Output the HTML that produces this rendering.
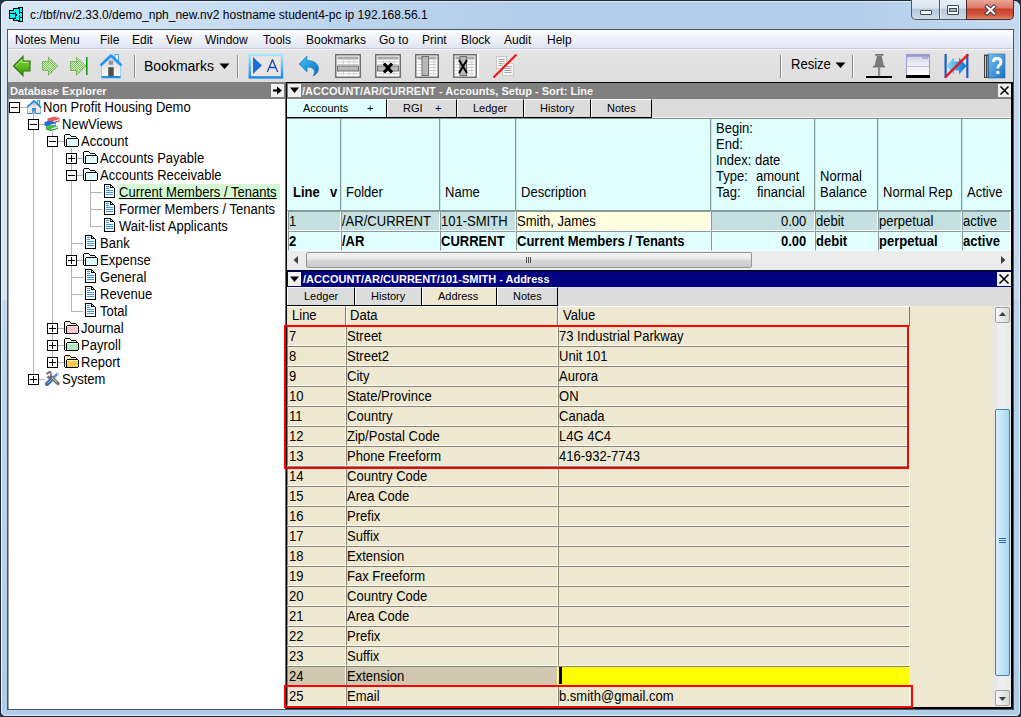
<!DOCTYPE html><html><head><meta charset="utf-8"><style>
html,body{margin:0;padding:0;} body{width:1021px;height:717px;overflow:hidden;position:relative;font-family:"Liberation Sans", sans-serif;background:#2a3444;}
div{box-sizing:border-box;}
</style></head><body>
<div style="position:absolute;left:0px;top:0px;width:1021px;height:717px;background:linear-gradient(90deg,#d8e6f4 0px,#cde0f2 180px,#bcd5ee 330px,#b4cfeb 520px,#b4cfeb 860px,#c6daf0 1021px);border:1px solid #1c2a3a;border-radius:7px 7px 6px 6px;"></div>
<div style="position:absolute;left:1px;top:1px;width:1019px;height:715px;border:1px solid rgba(255,255,255,0.55);border-radius:6px 6px 5px 5px;"></div>
<div style="position:absolute;left:2px;top:300px;width:6px;height:409px;background:linear-gradient(#c4d9f0,#b0cce8);"></div>
<div style="position:absolute;left:1013px;top:300px;width:6px;height:409px;background:linear-gradient(#bcd4ee,#b0cce8);"></div>
<div style="position:absolute;left:1px;top:700px;width:1019px;height:16px;background:#b1cde9;border:1px solid rgba(255,255,255,0.55);border-top:none;border-radius:0 0 5px 5px;"></div>
<svg style="position:absolute;left:0px;top:0px" width="30" height="30" viewBox="0 0 30 30"><rect x="9" y="10" width="7" height="9" fill="#000"/><rect x="13" y="8" width="7" height="13" fill="#000"/><rect x="18" y="7" width="5" height="15" fill="#000"/><rect x="10" y="11" width="5" height="2" fill="#00ffff"/><rect x="10" y="14" width="5" height="4" fill="#00ffff"/><rect x="14" y="9" width="5" height="3" fill="#00ffff"/><rect x="16" y="12" width="3" height="2" fill="#00ffff"/><rect x="16" y="16" width="3" height="4" fill="#00ffff"/><rect x="14" y="19" width="3" height="1" fill="#00ffff"/><rect x="17" y="14" width="2" height="2" fill="#00ffff"/><rect x="20" y="8" width="2" height="4" fill="#00ffff"/><rect x="20" y="13" width="2" height="4" fill="#00ffff"/><rect x="20" y="18" width="2" height="3" fill="#00ffff"/><rect x="19" y="14" width="1" height="1" fill="#00ffff"/></svg>
<div style="position:absolute;left:30px;top:8px;font-size:12px;font-weight:normal;color:#000;line-height:15px;white-space:pre;">c:/tbf/nv/2.33.0/demo_nph_new.nv2 hostname student4-pc ip 192.168.56.1</div>
<div style="position:absolute;left:911px;top:0px;width:56px;height:20px;background:linear-gradient(#e8eff8,#dae5f1 40%,#b9cadd 50%,#c4d3e4 80%,#d0dcea);border:1px solid #4a5868;border-top:none;border-radius:0 0 0 5px;"></div>
<div style="position:absolute;left:939px;top:0px;width:1px;height:20px;background:#4a5868;"></div>
<div style="position:absolute;left:940px;top:0px;width:1px;height:19px;background:rgba(255,255,255,0.6);"></div>
<div style="position:absolute;left:920px;top:10px;width:12px;height:5px;background:#fff;border:1px solid #3c4858;border-radius:1px;"></div>
<div style="position:absolute;left:947px;top:5px;width:12px;height:10px;border:1px solid #3c4858;border-radius:1px;background:#fff;"></div>
<div style="position:absolute;left:949px;top:8px;width:8px;height:4px;background:#a8b8cc;border:1px solid #3c4858;"></div>
<div style="position:absolute;left:966px;top:0px;width:48px;height:20px;background:linear-gradient(#eaa698,#dc7a68 40%,#c8402a 50%,#d05a40 80%,#e08a70);border:1px solid #4a2820;border-top:none;border-radius:0 0 5px 0;"></div>
<svg style="position:absolute;left:983px;top:4px" width="15" height="12" viewBox="0 0 15 12"><path d="M4 2.8 L11 9.2 M11 2.8 L4 9.2" stroke="#3a3a4a" stroke-width="4" stroke-linecap="square"/><path d="M4 2.8 L11 9.2 M11 2.8 L4 9.2" stroke="#fff" stroke-width="2.2" stroke-linecap="square"/></svg>
<div style="position:absolute;left:7px;top:29px;width:1007px;height:681px;background:#fff;border:1px solid #4a5564;"></div>
<div style="position:absolute;left:8px;top:30px;width:1005px;height:19px;background:linear-gradient(#fcfdfe,#eef1f9 50%,#dce2ef);"></div>
<div style="position:absolute;left:8px;top:48px;width:1005px;height:1px;background:#c8ccd8;"></div>
<div style="position:absolute;left:8px;top:49px;width:1005px;height:1px;background:#f8f8fa;"></div>
<div style="position:absolute;left:15px;top:33px;font-size:12px;font-weight:normal;color:#000;line-height:15px;white-space:pre;">Notes Menu</div>
<div style="position:absolute;left:100px;top:33px;font-size:12px;font-weight:normal;color:#000;line-height:15px;white-space:pre;">File</div>
<div style="position:absolute;left:132px;top:33px;font-size:12px;font-weight:normal;color:#000;line-height:15px;white-space:pre;">Edit</div>
<div style="position:absolute;left:166px;top:33px;font-size:12px;font-weight:normal;color:#000;line-height:15px;white-space:pre;">View</div>
<div style="position:absolute;left:205px;top:33px;font-size:12px;font-weight:normal;color:#000;line-height:15px;white-space:pre;">Window</div>
<div style="position:absolute;left:263px;top:33px;font-size:12px;font-weight:normal;color:#000;line-height:15px;white-space:pre;">Tools</div>
<div style="position:absolute;left:306px;top:33px;font-size:12px;font-weight:normal;color:#000;line-height:15px;white-space:pre;">Bookmarks</div>
<div style="position:absolute;left:379px;top:33px;font-size:12px;font-weight:normal;color:#000;line-height:15px;white-space:pre;">Go to</div>
<div style="position:absolute;left:422px;top:33px;font-size:12px;font-weight:normal;color:#000;line-height:15px;white-space:pre;">Print</div>
<div style="position:absolute;left:461px;top:33px;font-size:12px;font-weight:normal;color:#000;line-height:15px;white-space:pre;">Block</div>
<div style="position:absolute;left:504px;top:33px;font-size:12px;font-weight:normal;color:#000;line-height:15px;white-space:pre;">Audit</div>
<div style="position:absolute;left:547px;top:33px;font-size:12px;font-weight:normal;color:#000;line-height:15px;white-space:pre;">Help</div>
<div style="position:absolute;left:8px;top:50px;width:1005px;height:32px;background:linear-gradient(#e4e4e4,#dedede);"></div>
<svg style="position:absolute;left:0;top:0" width="0" height="0"><defs><linearGradient id="gG" x1="0" y1="0" x2="0" y2="1"><stop offset="0" stop-color="#8ad84a"/><stop offset="1" stop-color="#3c9a00"/></linearGradient><pattern id="dots" width="2" height="2" patternUnits="userSpaceOnUse"><rect width="1" height="1" fill="#3c9a10"/><rect x="1" y="1" width="1" height="1" fill="#3c9a10"/><rect x="1" width="1" height="1" fill="#b8e0a0"/><rect y="1" width="1" height="1" fill="#b8e0a0"/></pattern><linearGradient id="gB" x1="0" y1="0" x2="1" y2="1"><stop offset="0" stop-color="#40c8f8"/><stop offset="1" stop-color="#0a6ab8"/></linearGradient><linearGradient id="gAB" x1="0" y1="0" x2="0" y2="1"><stop offset="0" stop-color="#a8e8ff"/><stop offset="1" stop-color="#1888e8"/></linearGradient></defs></svg>
<svg style="position:absolute;left:12px;top:55px" width="20" height="22" viewBox="0 0 20 22"><path d="M1.5 11 L11 1.5 L11 6 L18 6 L18 16 L11 16 L11 20.5 Z" fill="url(#gG)" stroke="#2e7a10" stroke-width="1.2"/><path d="M4 11 L10 5 L10 7.5 L16.5 7.5" fill="none" stroke="#b8f080" stroke-width="1" opacity="0.8"/></svg>
<svg style="position:absolute;left:0;top:0" width="0" height="0"><defs><pattern id="dots2" width="2" height="2" patternUnits="userSpaceOnUse"><rect width="2" height="2" fill="#d4eec4"/><rect width="1" height="1" fill="#7cc060"/><rect x="1" y="1" width="1" height="1" fill="#7cc060"/></pattern></defs></svg>
<svg style="position:absolute;left:41px;top:55px" width="20" height="22" viewBox="0 0 20 22"><path d="M1.5 6.5 L7.5 6.5 L7.5 2 L17 11 L7.5 20 L7.5 15.5 L1.5 15.5 Z" fill="url(#dots2)" stroke="#3a9a18" stroke-width="1" stroke-dasharray="1 1"/></svg>
<svg style="position:absolute;left:69px;top:55px" width="20" height="22" viewBox="0 0 20 22"><path d="M1.5 6.5 L7.5 6.5 L7.5 2 L17 11 L7.5 20 L7.5 15.5 L1.5 15.5 Z" fill="url(#dots2)" stroke="#3a9a18" stroke-width="1" stroke-dasharray="1 1"/><rect x="17" y="2" width="1.6" height="18" fill="#1a9a1a"/></svg>
<svg style="position:absolute;left:99px;top:53px" width="24" height="26" viewBox="0 0 24 26"><defs><linearGradient id="gW" x1="0" y1="0" x2="0" y2="1"><stop offset="0" stop-color="#d0d0d0"/><stop offset="1" stop-color="#ffffff"/></linearGradient></defs><rect x="16" y="1.5" width="3.5" height="7" fill="#e8f4fc" stroke="#48a8e8" stroke-width="1"/><path d="M2.5 12 L12 3 L21.5 12 L21.5 24 L2.5 24 Z" fill="url(#gW)" stroke="#90c8f0" stroke-width="0.8"/><path d="M1.5 12.5 L12 2.5 L22.5 12.5" fill="none" stroke="#2098f0" stroke-width="2.6" stroke-linejoin="round"/><rect x="2.5" y="23" width="19" height="2.2" fill="#1a90e8"/><rect x="9.2" y="14.2" width="5.5" height="9" fill="#505050"/><rect x="9.8" y="7.7" width="4.2" height="4" fill="#909090"/></svg>
<div style="position:absolute;left:134px;top:55px;width:1px;height:23px;background:#8c8c8c;"></div>
<div style="position:absolute;left:135px;top:55px;width:1px;height:23px;background:#f8f8f8;"></div>
<div style="position:absolute;left:237px;top:55px;width:1px;height:23px;background:#8c8c8c;"></div>
<div style="position:absolute;left:238px;top:55px;width:1px;height:23px;background:#f8f8f8;"></div>
<div style="position:absolute;left:780px;top:55px;width:1px;height:23px;background:#8c8c8c;"></div>
<div style="position:absolute;left:781px;top:55px;width:1px;height:23px;background:#f8f8f8;"></div>
<div style="position:absolute;left:852px;top:55px;width:1px;height:23px;background:#8c8c8c;"></div>
<div style="position:absolute;left:853px;top:55px;width:1px;height:23px;background:#f8f8f8;"></div>
<div style="position:absolute;left:144px;top:58px;font-size:14px;font-weight:normal;color:#000;line-height:17px;white-space:pre;">Bookmarks</div>
<svg style="position:absolute;left:219px;top:63px" width="11" height="7" viewBox="0 0 11 7"><path d="M0.5 0.5 L10.5 0.5 L5.5 6 Z" fill="#000"/></svg>
<div style="position:absolute;left:791px;top:56px;font-size:14px;font-weight:normal;color:#000;line-height:17px;white-space:pre;transform:scaleX(0.93);transform-origin:0 0;">Resize</div>
<svg style="position:absolute;left:835px;top:62px" width="11" height="7" viewBox="0 0 11 7"><path d="M0.5 0.5 L10.5 0.5 L5.5 6 Z" fill="#000"/></svg>
<svg style="position:absolute;left:248px;top:53px" width="36" height="26" viewBox="0 0 36 26"><rect x="1.8" y="2" width="32.2" height="22.4" fill="#ece4e0" stroke="url(#gAB)" stroke-width="2.4"/><path d="M5 4 L5 21 L14 12.5 Z" fill="#1a70d8"/><path d="M19.3 19 L24.5 6.8 L29.7 19 M21.2 14.5 L27.8 14.5" fill="none" stroke="#1048b0" stroke-width="1.3" stroke-linejoin="round"/></svg>
<svg style="position:absolute;left:298px;top:55px" width="22" height="22" viewBox="0 0 22 22"><path d="M1 9 L9 1 L9 5.5 C16 5 20.5 9 20.5 13.5 C20.5 17 18.5 19.5 15 21 C17 18 17 15 14 13 C12.5 12 10.5 12 9 12.5 L9 17 Z" fill="url(#gB)" stroke="#1a78c0" stroke-width="0.6"/></svg>
<svg style="position:absolute;left:335px;top:54px" width="26" height="24" viewBox="0 0 26 24"><rect x="0.75" y="0.75" width="24.5" height="22.5" fill="#fff" stroke="#6e6e6e" stroke-width="1.5"/><rect x="2.5" y="2.5" width="21" height="3" fill="#a8a8a8"/><rect x="2.5" y="7.5" width="21" height="0.8" fill="#c0c0c0"/><rect x="2.5" y="10" width="21" height="0.8" fill="#c0c0c0"/><rect x="2.5" y="13" width="21" height="0.8" fill="#c0c0c0"/><rect x="2.5" y="16" width="21" height="0.8" fill="#c0c0c0"/><rect x="2.5" y="19.5" width="21" height="0.8" fill="#c0c0c0"/><rect x="8" y="2.5" width="0.8" height="19" fill="#c8c8c8"/><rect x="13.5" y="2.5" width="0.8" height="19" fill="#c8c8c8"/><rect x="18.5" y="2.5" width="0.8" height="19" fill="#c8c8c8"/><rect x="2.5" y="12" width="21" height="5" fill="#b8b8b8" stroke="#707070" stroke-width="1"/></svg>
<svg style="position:absolute;left:375px;top:54px" width="26" height="24" viewBox="0 0 26 24"><rect x="0.75" y="0.75" width="24.5" height="22.5" fill="#fff" stroke="#6e6e6e" stroke-width="1.5"/><rect x="2.5" y="2.5" width="21" height="3" fill="#a8a8a8"/><rect x="2.5" y="7.5" width="21" height="0.8" fill="#c0c0c0"/><rect x="2.5" y="10" width="21" height="0.8" fill="#c0c0c0"/><rect x="2.5" y="13" width="21" height="0.8" fill="#c0c0c0"/><rect x="2.5" y="16" width="21" height="0.8" fill="#c0c0c0"/><rect x="2.5" y="19.5" width="21" height="0.8" fill="#c0c0c0"/><rect x="8" y="2.5" width="0.8" height="19" fill="#c8c8c8"/><rect x="13.5" y="2.5" width="0.8" height="19" fill="#c8c8c8"/><rect x="18.5" y="2.5" width="0.8" height="19" fill="#c8c8c8"/><rect x="2.5" y="12" width="21" height="5" fill="#b8b8b8" stroke="#707070" stroke-width="1"/><path d="M9 9.5 L17 18.5 M17 9.5 L9 18.5" stroke="#000" stroke-width="3"/></svg>
<svg style="position:absolute;left:415px;top:54px" width="24" height="24" viewBox="0 0 24 24"><rect x="0.75" y="0.75" width="22.5" height="22.5" fill="#fff" stroke="#6e6e6e" stroke-width="1.5"/><rect x="2.5" y="2.5" width="19" height="3" fill="#a8a8a8"/><rect x="2.5" y="7.5" width="19" height="0.8" fill="#c0c0c0"/><rect x="2.5" y="10" width="19" height="0.8" fill="#c0c0c0"/><rect x="2.5" y="13" width="19" height="0.8" fill="#c0c0c0"/><rect x="2.5" y="16" width="19" height="0.8" fill="#c0c0c0"/><rect x="2.5" y="19.5" width="19" height="0.8" fill="#c0c0c0"/><rect x="8" y="2.5" width="0.8" height="19" fill="#c8c8c8"/><rect x="13.5" y="2.5" width="0.8" height="19" fill="#c8c8c8"/><rect x="18.5" y="2.5" width="0.8" height="19" fill="#c8c8c8"/><rect x="7" y="2.5" width="6.5" height="19" fill="#b8b8b8" stroke="#707070" stroke-width="1"/></svg>
<svg style="position:absolute;left:453px;top:54px" width="24" height="24" viewBox="0 0 24 24"><rect x="0.75" y="0.75" width="22.5" height="22.5" fill="#fff" stroke="#6e6e6e" stroke-width="1.5"/><rect x="2.5" y="2.5" width="19" height="3" fill="#a8a8a8"/><rect x="2.5" y="7.5" width="19" height="0.8" fill="#c0c0c0"/><rect x="2.5" y="10" width="19" height="0.8" fill="#c0c0c0"/><rect x="2.5" y="13" width="19" height="0.8" fill="#c0c0c0"/><rect x="2.5" y="16" width="19" height="0.8" fill="#c0c0c0"/><rect x="2.5" y="19.5" width="19" height="0.8" fill="#c0c0c0"/><rect x="8" y="2.5" width="0.8" height="19" fill="#c8c8c8"/><rect x="13.5" y="2.5" width="0.8" height="19" fill="#c8c8c8"/><rect x="18.5" y="2.5" width="0.8" height="19" fill="#c8c8c8"/><rect x="7" y="2.5" width="6.5" height="19" fill="#b8b8b8" stroke="#707070" stroke-width="1"/><path d="M6 6 L14 19 M14 6 L6 19" stroke="#000" stroke-width="2"/></svg>
<div style="position:absolute;left:477px;top:54px;width:2px;height:24px;background:#fff;"></div>
<svg style="position:absolute;left:492px;top:53px" width="26" height="26" viewBox="0 0 26 26"><rect x="4.5" y="3.5" width="10" height="12" fill="#f4f4f4" stroke="#c8c8c8"/><path d="M6.5 6.5 h6 M6.5 8.5 h6 M6.5 10.5 h6 M6.5 12.5 h6" stroke="#909090" stroke-width="0.8"/><rect x="10.5" y="10.5" width="11" height="12" fill="#f4f4f4" stroke="#c8c8c8"/><path d="M12.5 13.5 h7 M12.5 15.5 h7 M12.5 17.5 h7 M12.5 19.5 h7" stroke="#909090" stroke-width="0.8"/><path d="M1.5 24.5 L24.5 1.5" stroke="#f01010" stroke-width="2"/></svg>
<svg style="position:absolute;left:865px;top:53px" width="28" height="26" viewBox="0 0 28 26"><rect x="10" y="1" width="8.5" height="1.6" fill="#707070"/><path d="M12 2.5 L16.5 2.5 L19 13 L9.5 13 Z" fill="#7a7a7a"/><rect x="8" y="12.8" width="12" height="1.6" fill="#707070"/><rect x="13" y="14.3" width="2.2" height="9" fill="#8a8a8a"/><rect x="1" y="23" width="26" height="2" fill="#000"/></svg>
<svg style="position:absolute;left:906px;top:54px" width="24" height="24" viewBox="0 0 24 24"><defs><linearGradient id="gL" x1="0" y1="0" x2="0" y2="1"><stop offset="0" stop-color="#c8c8e8"/><stop offset="0.35" stop-color="#e8e8f2"/><stop offset="0.55" stop-color="#f0f0f4"/><stop offset="1" stop-color="#ffffff"/></linearGradient></defs><rect x="0.5" y="0.5" width="23" height="22" fill="url(#gL)" stroke="#9c9cc8"/><rect x="1" y="1" width="22" height="1.8" fill="#9898d0"/><rect x="16" y="3" width="6" height="2" fill="#b0b0d8"/><rect x="1" y="12" width="22" height="1" fill="#c0c0dc"/><rect x="0" y="21" width="24" height="3" fill="#000"/></svg>
<svg style="position:absolute;left:943px;top:53px" width="27" height="26" viewBox="0 0 27 26"><defs><linearGradient id="gA1" x1="0" y1="0" x2="1" y2="0"><stop offset="0" stop-color="#90dcff"/><stop offset="1" stop-color="#40b0f0"/></linearGradient><linearGradient id="gA2" x1="0" y1="0" x2="1" y2="0"><stop offset="0" stop-color="#40a8f0"/><stop offset="1" stop-color="#1070d0"/></linearGradient></defs><rect x="1.5" y="1" width="2.2" height="24" fill="#1a60c8"/><rect x="23.2" y="1" width="2.2" height="24" fill="#1a60c8"/><path d="M3.5 13 L11 4.5 L11 8.5 L14 8.5 L14 17.5 L11 17.5 L11 21.5 Z" fill="url(#gA1)"/><path d="M23.5 13 L16 4.5 L16 8.5 L13 8.5 L13 17.5 L16 17.5 L16 21.5 Z" fill="url(#gA2)"/><path d="M2 24.5 L25 1.5" stroke="#f81010" stroke-width="2.4"/></svg>
<svg style="position:absolute;left:983px;top:53px" width="23" height="26" viewBox="0 0 23 26"><defs><linearGradient id="gH" x1="0" y1="0" x2="1" y2="1"><stop offset="0" stop-color="#78c0f0"/><stop offset="1" stop-color="#1a70c8"/></linearGradient></defs><rect x="1" y="1.5" width="5" height="23.5" fill="#404040"/><rect x="2" y="3" width="1" height="21" fill="#d0d0d0"/><rect x="4" y="3" width="1" height="21" fill="#909090"/><rect x="5.5" y="1" width="16.5" height="24" fill="url(#gH)" stroke="#2a6ab0" stroke-width="0.6"/><path d="M10.5 9 Q10.5 5.5 14 5.5 Q18 5.5 18 9 Q18 11 16 12.5 Q14.8 13.3 14.8 15.5" fill="none" stroke="#fff" stroke-width="2.8"/><circle cx="14.8" cy="19.5" r="1.8" fill="#fff"/></svg>
<div style="position:absolute;left:8px;top:82px;width:278px;height:627px;background:#fff;border-left:1px solid #a0a0a0;"></div>
<div style="position:absolute;left:8px;top:82px;width:277px;height:17px;background:#808080;"></div>
<div style="position:absolute;left:10px;top:84px;font-size:11px;font-weight:bold;color:#f6f6f6;line-height:14px;white-space:pre;">Database Explorer</div>
<div style="position:absolute;left:271px;top:84px;width:13px;height:13px;background:#f0f0f0;"></div>
<svg style="position:absolute;left:272px;top:85px" width="11" height="11" viewBox="0 0 11 11"><path d="M1 5.5 L7 5.5" stroke="#000" stroke-width="2.2"/><path d="M5 1.5 L10 5.5 L5 9.5 Z" fill="#000"/></svg>
<div style="position:absolute;left:285px;top:82px;width:1px;height:627px;background:#6a6a6a;"></div>
<div style="position:absolute;left:286px;top:82px;width:1px;height:627px;background:#000;"></div>
<div style="position:absolute;left:33px;top:114px;width:1px;height:260px;background:#b4b4b4;"></div>
<div style="position:absolute;left:52px;top:131px;width:1px;height:226px;background:#b4b4b4;"></div>
<div style="position:absolute;left:71px;top:148px;width:1px;height:163px;background:#b4b4b4;"></div>
<div style="position:absolute;left:90px;top:182px;width:1px;height:44px;background:#b4b4b4;"></div>
<div style="position:absolute;left:14px;top:107px;width:12px;height:1px;background:#b4b4b4;"></div>
<div style="position:absolute;left:9px;top:102px;width:11px;height:11px;background:#fff;border:1px solid #000;"></div>
<div style="position:absolute;left:11px;top:107px;width:7px;height:1px;background:#000;"></div>
<svg style="position:absolute;left:26px;top:99px" width="17" height="15" viewBox="0 0 17 15"><defs><radialGradient id="hw" cx="0.5" cy="0.2" r="0.8"><stop offset="0" stop-color="#c0c0c0"/><stop offset="0.5" stop-color="#f0f0f0"/><stop offset="1" stop-color="#e8e4e0"/></radialGradient><linearGradient id="hd" x1="0" y1="0" x2="0" y2="1"><stop offset="0" stop-color="#2a80c8"/><stop offset="1" stop-color="#90b8d0"/></linearGradient></defs><path d="M1.5 8 L8 2 L14.5 8 V14 H1.5 Z" fill="url(#hw)"/><path d="M11.8 5 V1.3 H13.7 V6" fill="#fff" stroke="#1a88e0" stroke-width="1"/><path d="M0.8 8.6 L8 1.8 L15.2 8.6" fill="none" stroke="#1a88e0" stroke-width="1.7"/><rect x="1" y="14" width="14" height="1" fill="#1a88e0"/><rect x="6" y="9" width="4" height="6" fill="url(#hd)"/><rect x="1" y="9" width="1" height="5" fill="#909090" opacity="0.5"/><rect x="14" y="9" width="1" height="5" fill="#909090" opacity="0.5"/></svg>
<div style="position:absolute;left:43px;top:99px;font-size:14px;font-weight:normal;color:#000;line-height:17px;white-space:pre;transform:scaleX(0.93);transform-origin:0 0;">Non Profit Housing Demo</div>
<div style="position:absolute;left:33px;top:124px;width:12px;height:1px;background:#b4b4b4;"></div>
<div style="position:absolute;left:28px;top:119px;width:11px;height:11px;background:#fff;border:1px solid #000;"></div>
<div style="position:absolute;left:30px;top:124px;width:7px;height:1px;background:#000;"></div>
<svg style="position:absolute;left:44px;top:116px" width="17" height="15" viewBox="0 0 17 15"><path d="M3.5 2.5 L10 0.5 L15.5 2 L15.5 5 L9 7 L3.5 5.5 Z" fill="#f05858"/><path d="M9.5 5.5 L15 3.8" stroke="#fff" stroke-width="1.3"/><path d="M3.5 5.5 L9 7 L15.5 5" fill="none" stroke="#b82020" stroke-width="0.8"/><path d="M0.5 6 L5 4.8 L12 6.5 L12 9.5 L5.5 11 L0.5 9.5 Z" fill="#1a70e0"/><path d="M5.8 9.6 L11.5 8.2" stroke="#fff" stroke-width="1.2"/><path d="M2 10 L6 9 L14 10.5 L14 12.5 L7 14.5 L2 13 Z" fill="#40c040"/><path d="M7.2 13 L13.5 11.4" stroke="#fff" stroke-width="1.1"/><path d="M2 13 L7 14.5 L14 12.5" fill="none" stroke="#208020" stroke-width="0.8"/></svg>
<div style="position:absolute;left:62px;top:116px;font-size:14px;font-weight:normal;color:#000;line-height:17px;white-space:pre;transform:scaleX(0.93);transform-origin:0 0;">NewViews</div>
<div style="position:absolute;left:52px;top:141px;width:12px;height:1px;background:#b4b4b4;"></div>
<div style="position:absolute;left:47px;top:136px;width:11px;height:11px;background:#fff;border:1px solid #000;"></div>
<div style="position:absolute;left:49px;top:141px;width:7px;height:1px;background:#000;"></div>
<svg style="position:absolute;left:64px;top:134px" width="16" height="13" viewBox="0 0 16 13"><rect x="1" y="1" width="5" height="11" fill="#f4ffff"/><rect x="6" y="2" width="7" height="2" fill="#f4ffff"/><rect x="3" y="5" width="11" height="7" fill="#e0ffff"/><rect x="3" y="5" width="11" height="1" fill="#f4ffff"/><rect x="0" y="1" width="1" height="11" fill="#000"/><rect x="1" y="0" width="5" height="1" fill="#000"/><rect x="6" y="1" width="1" height="1" fill="#000"/><rect x="7" y="2" width="5" height="1" fill="#000"/><rect x="12" y="3" width="1" height="1" fill="#000"/><rect x="3" y="4" width="11" height="1" fill="#000"/><rect x="2" y="5" width="1" height="7" fill="#000"/><rect x="14" y="5" width="1" height="7" fill="#000"/><rect x="1" y="12" width="13" height="1" fill="#000"/></svg>
<div style="position:absolute;left:81px;top:133px;font-size:14px;font-weight:normal;color:#000;line-height:17px;white-space:pre;transform:scaleX(0.93);transform-origin:0 0;">Account</div>
<div style="position:absolute;left:71px;top:158px;width:12px;height:1px;background:#b4b4b4;"></div>
<div style="position:absolute;left:66px;top:153px;width:11px;height:11px;background:#fff;border:1px solid #000;"></div>
<div style="position:absolute;left:68px;top:158px;width:7px;height:1px;background:#000;"></div>
<div style="position:absolute;left:71px;top:155px;width:1px;height:7px;background:#000;"></div>
<svg style="position:absolute;left:83px;top:151px" width="16" height="13" viewBox="0 0 16 13"><rect x="1" y="1" width="5" height="11" fill="#f4ffff"/><rect x="6" y="2" width="7" height="2" fill="#f4ffff"/><rect x="3" y="5" width="11" height="7" fill="#e0ffff"/><rect x="3" y="5" width="11" height="1" fill="#f4ffff"/><rect x="0" y="1" width="1" height="11" fill="#000"/><rect x="1" y="0" width="5" height="1" fill="#000"/><rect x="6" y="1" width="1" height="1" fill="#000"/><rect x="7" y="2" width="5" height="1" fill="#000"/><rect x="12" y="3" width="1" height="1" fill="#000"/><rect x="3" y="4" width="11" height="1" fill="#000"/><rect x="2" y="5" width="1" height="7" fill="#000"/><rect x="14" y="5" width="1" height="7" fill="#000"/><rect x="1" y="12" width="13" height="1" fill="#000"/></svg>
<div style="position:absolute;left:100px;top:150px;font-size:14px;font-weight:normal;color:#000;line-height:17px;white-space:pre;transform:scaleX(0.93);transform-origin:0 0;">Accounts Payable</div>
<div style="position:absolute;left:71px;top:175px;width:12px;height:1px;background:#b4b4b4;"></div>
<div style="position:absolute;left:66px;top:170px;width:11px;height:11px;background:#fff;border:1px solid #000;"></div>
<div style="position:absolute;left:68px;top:175px;width:7px;height:1px;background:#000;"></div>
<svg style="position:absolute;left:83px;top:168px" width="16" height="13" viewBox="0 0 16 13"><rect x="1" y="1" width="5" height="11" fill="#f4ffff"/><rect x="6" y="2" width="7" height="2" fill="#f4ffff"/><rect x="3" y="5" width="11" height="7" fill="#e0ffff"/><rect x="3" y="5" width="11" height="1" fill="#f4ffff"/><rect x="0" y="1" width="1" height="11" fill="#000"/><rect x="1" y="0" width="5" height="1" fill="#000"/><rect x="6" y="1" width="1" height="1" fill="#000"/><rect x="7" y="2" width="5" height="1" fill="#000"/><rect x="12" y="3" width="1" height="1" fill="#000"/><rect x="3" y="4" width="11" height="1" fill="#000"/><rect x="2" y="5" width="1" height="7" fill="#000"/><rect x="14" y="5" width="1" height="7" fill="#000"/><rect x="1" y="12" width="13" height="1" fill="#000"/></svg>
<div style="position:absolute;left:100px;top:167px;font-size:14px;font-weight:normal;color:#000;line-height:17px;white-space:pre;transform:scaleX(0.93);transform-origin:0 0;">Accounts Receivable</div>
<div style="position:absolute;left:90px;top:192px;width:12px;height:1px;background:#b4b4b4;"></div>
<svg style="position:absolute;left:104px;top:184px" width="11" height="14" viewBox="0 0 11 14"><rect x="1" y="1" width="9" height="12" fill="#fff"/><rect x="0" y="0" width="7" height="1" fill="#000"/><rect x="0" y="1" width="1" height="13" fill="#000"/><rect x="10" y="4" width="1" height="10" fill="#000"/><rect x="1" y="13" width="9" height="1" fill="#000"/><rect x="7" y="1" width="1" height="1" fill="#000"/><rect x="8" y="2" width="1" height="1" fill="#000"/><rect x="9" y="3" width="1" height="1" fill="#000"/><rect x="6" y="0" width="1" height="4" fill="#000"/><rect x="6" y="3" width="4" height="1" fill="#000"/><rect x="2" y="2" width="3" height="1" fill="#3898e8"/><rect x="2" y="4" width="3" height="1" fill="#3898e8"/><rect x="2" y="6" width="7" height="1" fill="#3898e8"/><rect x="2" y="8" width="7" height="1" fill="#3898e8"/><rect x="2" y="10" width="7" height="1" fill="#3898e8"/></svg>
<div style="position:absolute;left:117px;top:184px;width:163px;height:16px;background:#d4f8d4;"></div>
<div style="position:absolute;left:119px;top:184px;font-size:14px;font-weight:normal;color:#000;line-height:17px;white-space:pre;transform:scaleX(0.93);transform-origin:0 0;text-decoration:underline;">Current Members / Tenants</div>
<div style="position:absolute;left:90px;top:209px;width:12px;height:1px;background:#b4b4b4;"></div>
<svg style="position:absolute;left:104px;top:201px" width="11" height="14" viewBox="0 0 11 14"><rect x="1" y="1" width="9" height="12" fill="#fff"/><rect x="0" y="0" width="7" height="1" fill="#000"/><rect x="0" y="1" width="1" height="13" fill="#000"/><rect x="10" y="4" width="1" height="10" fill="#000"/><rect x="1" y="13" width="9" height="1" fill="#000"/><rect x="7" y="1" width="1" height="1" fill="#000"/><rect x="8" y="2" width="1" height="1" fill="#000"/><rect x="9" y="3" width="1" height="1" fill="#000"/><rect x="6" y="0" width="1" height="4" fill="#000"/><rect x="6" y="3" width="4" height="1" fill="#000"/><rect x="2" y="2" width="3" height="1" fill="#3898e8"/><rect x="2" y="4" width="3" height="1" fill="#3898e8"/><rect x="2" y="6" width="7" height="1" fill="#3898e8"/><rect x="2" y="8" width="7" height="1" fill="#3898e8"/><rect x="2" y="10" width="7" height="1" fill="#3898e8"/></svg>
<div style="position:absolute;left:119px;top:201px;font-size:14px;font-weight:normal;color:#000;line-height:17px;white-space:pre;transform:scaleX(0.93);transform-origin:0 0;">Former Members / Tenants</div>
<div style="position:absolute;left:90px;top:226px;width:12px;height:1px;background:#b4b4b4;"></div>
<svg style="position:absolute;left:104px;top:218px" width="11" height="14" viewBox="0 0 11 14"><rect x="1" y="1" width="9" height="12" fill="#fff"/><rect x="0" y="0" width="7" height="1" fill="#000"/><rect x="0" y="1" width="1" height="13" fill="#000"/><rect x="10" y="4" width="1" height="10" fill="#000"/><rect x="1" y="13" width="9" height="1" fill="#000"/><rect x="7" y="1" width="1" height="1" fill="#000"/><rect x="8" y="2" width="1" height="1" fill="#000"/><rect x="9" y="3" width="1" height="1" fill="#000"/><rect x="6" y="0" width="1" height="4" fill="#000"/><rect x="6" y="3" width="4" height="1" fill="#000"/><rect x="2" y="2" width="3" height="1" fill="#3898e8"/><rect x="2" y="4" width="3" height="1" fill="#3898e8"/><rect x="2" y="6" width="7" height="1" fill="#3898e8"/><rect x="2" y="8" width="7" height="1" fill="#3898e8"/><rect x="2" y="10" width="7" height="1" fill="#3898e8"/></svg>
<div style="position:absolute;left:119px;top:218px;font-size:14px;font-weight:normal;color:#000;line-height:17px;white-space:pre;transform:scaleX(0.93);transform-origin:0 0;">Wait-list Applicants</div>
<div style="position:absolute;left:71px;top:243px;width:12px;height:1px;background:#b4b4b4;"></div>
<svg style="position:absolute;left:85px;top:235px" width="11" height="14" viewBox="0 0 11 14"><rect x="1" y="1" width="9" height="12" fill="#fff"/><rect x="0" y="0" width="7" height="1" fill="#000"/><rect x="0" y="1" width="1" height="13" fill="#000"/><rect x="10" y="4" width="1" height="10" fill="#000"/><rect x="1" y="13" width="9" height="1" fill="#000"/><rect x="7" y="1" width="1" height="1" fill="#000"/><rect x="8" y="2" width="1" height="1" fill="#000"/><rect x="9" y="3" width="1" height="1" fill="#000"/><rect x="6" y="0" width="1" height="4" fill="#000"/><rect x="6" y="3" width="4" height="1" fill="#000"/><rect x="2" y="2" width="3" height="1" fill="#3898e8"/><rect x="2" y="4" width="3" height="1" fill="#3898e8"/><rect x="2" y="6" width="7" height="1" fill="#3898e8"/><rect x="2" y="8" width="7" height="1" fill="#3898e8"/><rect x="2" y="10" width="7" height="1" fill="#3898e8"/></svg>
<div style="position:absolute;left:100px;top:235px;font-size:14px;font-weight:normal;color:#000;line-height:17px;white-space:pre;transform:scaleX(0.93);transform-origin:0 0;">Bank</div>
<div style="position:absolute;left:71px;top:260px;width:12px;height:1px;background:#b4b4b4;"></div>
<div style="position:absolute;left:66px;top:255px;width:11px;height:11px;background:#fff;border:1px solid #000;"></div>
<div style="position:absolute;left:68px;top:260px;width:7px;height:1px;background:#000;"></div>
<div style="position:absolute;left:71px;top:257px;width:1px;height:7px;background:#000;"></div>
<svg style="position:absolute;left:83px;top:253px" width="16" height="13" viewBox="0 0 16 13"><rect x="1" y="1" width="5" height="11" fill="#f4ffff"/><rect x="6" y="2" width="7" height="2" fill="#f4ffff"/><rect x="3" y="5" width="11" height="7" fill="#e0ffff"/><rect x="3" y="5" width="11" height="1" fill="#f4ffff"/><rect x="0" y="1" width="1" height="11" fill="#000"/><rect x="1" y="0" width="5" height="1" fill="#000"/><rect x="6" y="1" width="1" height="1" fill="#000"/><rect x="7" y="2" width="5" height="1" fill="#000"/><rect x="12" y="3" width="1" height="1" fill="#000"/><rect x="3" y="4" width="11" height="1" fill="#000"/><rect x="2" y="5" width="1" height="7" fill="#000"/><rect x="14" y="5" width="1" height="7" fill="#000"/><rect x="1" y="12" width="13" height="1" fill="#000"/></svg>
<div style="position:absolute;left:100px;top:252px;font-size:14px;font-weight:normal;color:#000;line-height:17px;white-space:pre;transform:scaleX(0.93);transform-origin:0 0;">Expense</div>
<div style="position:absolute;left:71px;top:277px;width:12px;height:1px;background:#b4b4b4;"></div>
<svg style="position:absolute;left:85px;top:269px" width="11" height="14" viewBox="0 0 11 14"><rect x="1" y="1" width="9" height="12" fill="#fff"/><rect x="0" y="0" width="7" height="1" fill="#000"/><rect x="0" y="1" width="1" height="13" fill="#000"/><rect x="10" y="4" width="1" height="10" fill="#000"/><rect x="1" y="13" width="9" height="1" fill="#000"/><rect x="7" y="1" width="1" height="1" fill="#000"/><rect x="8" y="2" width="1" height="1" fill="#000"/><rect x="9" y="3" width="1" height="1" fill="#000"/><rect x="6" y="0" width="1" height="4" fill="#000"/><rect x="6" y="3" width="4" height="1" fill="#000"/><rect x="2" y="2" width="3" height="1" fill="#3898e8"/><rect x="2" y="4" width="3" height="1" fill="#3898e8"/><rect x="2" y="6" width="7" height="1" fill="#3898e8"/><rect x="2" y="8" width="7" height="1" fill="#3898e8"/><rect x="2" y="10" width="7" height="1" fill="#3898e8"/></svg>
<div style="position:absolute;left:100px;top:269px;font-size:14px;font-weight:normal;color:#000;line-height:17px;white-space:pre;transform:scaleX(0.93);transform-origin:0 0;">General</div>
<div style="position:absolute;left:71px;top:294px;width:12px;height:1px;background:#b4b4b4;"></div>
<svg style="position:absolute;left:85px;top:286px" width="11" height="14" viewBox="0 0 11 14"><rect x="1" y="1" width="9" height="12" fill="#fff"/><rect x="0" y="0" width="7" height="1" fill="#000"/><rect x="0" y="1" width="1" height="13" fill="#000"/><rect x="10" y="4" width="1" height="10" fill="#000"/><rect x="1" y="13" width="9" height="1" fill="#000"/><rect x="7" y="1" width="1" height="1" fill="#000"/><rect x="8" y="2" width="1" height="1" fill="#000"/><rect x="9" y="3" width="1" height="1" fill="#000"/><rect x="6" y="0" width="1" height="4" fill="#000"/><rect x="6" y="3" width="4" height="1" fill="#000"/><rect x="2" y="2" width="3" height="1" fill="#3898e8"/><rect x="2" y="4" width="3" height="1" fill="#3898e8"/><rect x="2" y="6" width="7" height="1" fill="#3898e8"/><rect x="2" y="8" width="7" height="1" fill="#3898e8"/><rect x="2" y="10" width="7" height="1" fill="#3898e8"/></svg>
<div style="position:absolute;left:100px;top:286px;font-size:14px;font-weight:normal;color:#000;line-height:17px;white-space:pre;transform:scaleX(0.93);transform-origin:0 0;">Revenue</div>
<div style="position:absolute;left:71px;top:311px;width:12px;height:1px;background:#b4b4b4;"></div>
<svg style="position:absolute;left:85px;top:303px" width="11" height="14" viewBox="0 0 11 14"><rect x="1" y="1" width="9" height="12" fill="#fff"/><rect x="0" y="0" width="7" height="1" fill="#000"/><rect x="0" y="1" width="1" height="13" fill="#000"/><rect x="10" y="4" width="1" height="10" fill="#000"/><rect x="1" y="13" width="9" height="1" fill="#000"/><rect x="7" y="1" width="1" height="1" fill="#000"/><rect x="8" y="2" width="1" height="1" fill="#000"/><rect x="9" y="3" width="1" height="1" fill="#000"/><rect x="6" y="0" width="1" height="4" fill="#000"/><rect x="6" y="3" width="4" height="1" fill="#000"/><rect x="2" y="2" width="3" height="1" fill="#3898e8"/><rect x="2" y="4" width="3" height="1" fill="#3898e8"/><rect x="2" y="6" width="7" height="1" fill="#3898e8"/><rect x="2" y="8" width="7" height="1" fill="#3898e8"/><rect x="2" y="10" width="7" height="1" fill="#3898e8"/></svg>
<div style="position:absolute;left:100px;top:303px;font-size:14px;font-weight:normal;color:#000;line-height:17px;white-space:pre;transform:scaleX(0.93);transform-origin:0 0;">Total</div>
<div style="position:absolute;left:52px;top:328px;width:12px;height:1px;background:#b4b4b4;"></div>
<div style="position:absolute;left:47px;top:323px;width:11px;height:11px;background:#fff;border:1px solid #000;"></div>
<div style="position:absolute;left:49px;top:328px;width:7px;height:1px;background:#000;"></div>
<div style="position:absolute;left:52px;top:325px;width:1px;height:7px;background:#000;"></div>
<svg style="position:absolute;left:64px;top:321px" width="16" height="13" viewBox="0 0 16 13"><rect x="1" y="1" width="5" height="11" fill="#ffe8ec"/><rect x="6" y="2" width="7" height="2" fill="#ffe8ec"/><rect x="3" y="5" width="11" height="7" fill="#ffc4cc"/><rect x="3" y="5" width="11" height="1" fill="#ffe8ec"/><rect x="0" y="1" width="1" height="11" fill="#000"/><rect x="1" y="0" width="5" height="1" fill="#000"/><rect x="6" y="1" width="1" height="1" fill="#000"/><rect x="7" y="2" width="5" height="1" fill="#000"/><rect x="12" y="3" width="1" height="1" fill="#000"/><rect x="3" y="4" width="11" height="1" fill="#000"/><rect x="2" y="5" width="1" height="7" fill="#000"/><rect x="14" y="5" width="1" height="7" fill="#000"/><rect x="1" y="12" width="13" height="1" fill="#000"/></svg>
<div style="position:absolute;left:81px;top:320px;font-size:14px;font-weight:normal;color:#000;line-height:17px;white-space:pre;transform:scaleX(0.93);transform-origin:0 0;">Journal</div>
<div style="position:absolute;left:52px;top:345px;width:12px;height:1px;background:#b4b4b4;"></div>
<div style="position:absolute;left:47px;top:340px;width:11px;height:11px;background:#fff;border:1px solid #000;"></div>
<div style="position:absolute;left:49px;top:345px;width:7px;height:1px;background:#000;"></div>
<div style="position:absolute;left:52px;top:342px;width:1px;height:7px;background:#000;"></div>
<svg style="position:absolute;left:64px;top:338px" width="16" height="13" viewBox="0 0 16 13"><rect x="1" y="1" width="5" height="11" fill="#e0f8e8"/><rect x="6" y="2" width="7" height="2" fill="#e0f8e8"/><rect x="3" y="5" width="11" height="7" fill="#b4e8c4"/><rect x="3" y="5" width="11" height="1" fill="#e0f8e8"/><rect x="0" y="1" width="1" height="11" fill="#000"/><rect x="1" y="0" width="5" height="1" fill="#000"/><rect x="6" y="1" width="1" height="1" fill="#000"/><rect x="7" y="2" width="5" height="1" fill="#000"/><rect x="12" y="3" width="1" height="1" fill="#000"/><rect x="3" y="4" width="11" height="1" fill="#000"/><rect x="2" y="5" width="1" height="7" fill="#000"/><rect x="14" y="5" width="1" height="7" fill="#000"/><rect x="1" y="12" width="13" height="1" fill="#000"/></svg>
<div style="position:absolute;left:81px;top:337px;font-size:14px;font-weight:normal;color:#000;line-height:17px;white-space:pre;transform:scaleX(0.93);transform-origin:0 0;">Payroll</div>
<div style="position:absolute;left:52px;top:362px;width:12px;height:1px;background:#b4b4b4;"></div>
<div style="position:absolute;left:47px;top:357px;width:11px;height:11px;background:#fff;border:1px solid #000;"></div>
<div style="position:absolute;left:49px;top:362px;width:7px;height:1px;background:#000;"></div>
<div style="position:absolute;left:52px;top:359px;width:1px;height:7px;background:#000;"></div>
<svg style="position:absolute;left:64px;top:355px" width="16" height="13" viewBox="0 0 16 13"><rect x="1" y="1" width="5" height="11" fill="#fff0b0"/><rect x="6" y="2" width="7" height="2" fill="#fff0b0"/><rect x="3" y="5" width="11" height="7" fill="#f0cc50"/><rect x="3" y="5" width="11" height="1" fill="#fff0b0"/><rect x="0" y="1" width="1" height="11" fill="#000"/><rect x="1" y="0" width="5" height="1" fill="#000"/><rect x="6" y="1" width="1" height="1" fill="#000"/><rect x="7" y="2" width="5" height="1" fill="#000"/><rect x="12" y="3" width="1" height="1" fill="#000"/><rect x="3" y="4" width="11" height="1" fill="#000"/><rect x="2" y="5" width="1" height="7" fill="#000"/><rect x="14" y="5" width="1" height="7" fill="#000"/><rect x="1" y="12" width="13" height="1" fill="#000"/></svg>
<div style="position:absolute;left:81px;top:354px;font-size:14px;font-weight:normal;color:#000;line-height:17px;white-space:pre;transform:scaleX(0.93);transform-origin:0 0;">Report</div>
<div style="position:absolute;left:33px;top:379px;width:12px;height:1px;background:#b4b4b4;"></div>
<div style="position:absolute;left:28px;top:374px;width:11px;height:11px;background:#fff;border:1px solid #000;"></div>
<div style="position:absolute;left:30px;top:379px;width:7px;height:1px;background:#000;"></div>
<div style="position:absolute;left:33px;top:376px;width:1px;height:7px;background:#000;"></div>
<svg style="position:absolute;left:42px;top:368px" width="20" height="20" viewBox="0 0 20 20"><path d="M5 16 L11 10" stroke="#3a68b0" stroke-width="4" stroke-linecap="round"/><path d="M5.5 15.5 L10.5 10.5" stroke="#a8c4e4" stroke-width="1"/><path d="M11 10 L15.5 6" stroke="#5a88d0" stroke-width="2.4" stroke-linecap="round"/><circle cx="15.6" cy="6.2" r="0.8" fill="#fff"/><path d="M8.5 8.5 L16 15.5" stroke="#6a6a6a" stroke-width="3.2" stroke-linecap="round"/><path d="M8.8 8.6 L15.2 14.6" stroke="#f0f0f0" stroke-width="1"/><path d="M4.6 9.6 A3.6 3.6 0 0 0 10 9.8 L9.6 3.8 A3.6 3.6 0 0 0 4 6 L6.3 7.4 Z" fill="#707070"/><path d="M5.2 6.6 L7.6 8.4 L8.6 5 Z" fill="#fff"/></svg>
<div style="position:absolute;left:62px;top:371px;font-size:14px;font-weight:normal;color:#000;line-height:17px;white-space:pre;transform:scaleX(0.93);transform-origin:0 0;">System</div>
<div style="position:absolute;left:286px;top:82px;width:727px;height:627px;background:#000;"></div>
<div style="position:absolute;left:287px;top:83px;width:724px;height:16px;background:#808080;"></div>
<div style="position:absolute;left:288px;top:84px;width:13px;height:13px;background:#f0f0f0;"></div>
<svg style="position:absolute;left:289px;top:86px" width="11" height="9" viewBox="0 0 11 9"><path d="M1 1.5 L10 1.5 L5.5 7 Z" fill="#000"/></svg>
<div style="position:absolute;left:302px;top:84px;font-size:11px;font-weight:bold;color:#f6f6f6;line-height:14px;white-space:pre;">/ACCOUNT/AR/CURRENT - Accounts, Setup - Sort: Line</div>
<div style="position:absolute;left:998px;top:84px;width:13px;height:13px;background:#f0f0f0;"></div>
<svg style="position:absolute;left:999px;top:85px" width="11" height="11" viewBox="0 0 11 11"><path d="M1.5 1.5 L9.5 9.5 M9.5 1.5 L1.5 9.5" stroke="#000" stroke-width="1.6"/></svg>
<div style="position:absolute;left:287px;top:99px;width:724px;height:20px;background:#dcdcdc;border-bottom:1px solid #8a8a8a;"></div>
<div style="position:absolute;left:652px;top:117px;width:359px;height:1px;background:#f0f0f0;"></div>
<div style="position:absolute;left:287px;top:117px;width:365px;height:1px;background:#000;"></div>
<div style="position:absolute;left:287px;top:99px;width:100px;height:18px;background:#e0ffff;border-top:1px solid #fff;border-left:1px solid #e0ffff;border-right:1px solid #000;"></div>
<div style="position:absolute;left:303px;top:101px;font-size:11px;font-weight:normal;color:#000;line-height:14px;white-space:pre;">Accounts</div>
<div style="position:absolute;left:367px;top:101px;font-size:11px;font-weight:normal;color:#000;line-height:14px;white-space:pre;">+</div>
<div style="position:absolute;left:387px;top:99px;width:70px;height:18px;background:#dcdcdc;border-top:1px solid #fff;border-left:1px solid #fff;border-right:1px solid #000;"></div>
<div style="position:absolute;left:403px;top:101px;font-size:11px;font-weight:normal;color:#000;line-height:14px;white-space:pre;">RGI</div>
<div style="position:absolute;left:435px;top:101px;font-size:11px;font-weight:normal;color:#000;line-height:14px;white-space:pre;">+</div>
<div style="position:absolute;left:457px;top:99px;width:67px;height:18px;background:#dcdcdc;border-top:1px solid #fff;border-left:1px solid #fff;border-right:1px solid #000;"></div>
<div style="position:absolute;left:473px;top:101px;font-size:11px;font-weight:normal;color:#000;line-height:14px;white-space:pre;">Ledger</div>
<div style="position:absolute;left:524px;top:99px;width:67px;height:18px;background:#dcdcdc;border-top:1px solid #fff;border-left:1px solid #fff;border-right:1px solid #000;"></div>
<div style="position:absolute;left:540px;top:101px;font-size:11px;font-weight:normal;color:#000;line-height:14px;white-space:pre;">History</div>
<div style="position:absolute;left:591px;top:99px;width:61px;height:18px;background:#dcdcdc;border-top:1px solid #fff;border-left:1px solid #fff;border-right:1px solid #000;"></div>
<div style="position:absolute;left:607px;top:101px;font-size:11px;font-weight:normal;color:#000;line-height:14px;white-space:pre;">Notes</div>
<div style="position:absolute;left:287px;top:119px;width:724px;height:132px;background:#e0ffff;"></div>
<div style="position:absolute;left:340px;top:119px;width:1px;height:92px;background:#809a9a;"></div>
<div style="position:absolute;left:341px;top:119px;width:1px;height:92px;background:#c4e8e8;"></div>
<div style="position:absolute;left:439px;top:119px;width:1px;height:92px;background:#809a9a;"></div>
<div style="position:absolute;left:440px;top:119px;width:1px;height:92px;background:#c4e8e8;"></div>
<div style="position:absolute;left:515px;top:119px;width:1px;height:92px;background:#809a9a;"></div>
<div style="position:absolute;left:516px;top:119px;width:1px;height:92px;background:#c4e8e8;"></div>
<div style="position:absolute;left:710px;top:119px;width:1px;height:92px;background:#809a9a;"></div>
<div style="position:absolute;left:711px;top:119px;width:1px;height:92px;background:#c4e8e8;"></div>
<div style="position:absolute;left:814px;top:119px;width:1px;height:92px;background:#809a9a;"></div>
<div style="position:absolute;left:815px;top:119px;width:1px;height:92px;background:#c4e8e8;"></div>
<div style="position:absolute;left:877px;top:119px;width:1px;height:92px;background:#809a9a;"></div>
<div style="position:absolute;left:878px;top:119px;width:1px;height:92px;background:#c4e8e8;"></div>
<div style="position:absolute;left:961px;top:119px;width:1px;height:92px;background:#809a9a;"></div>
<div style="position:absolute;left:962px;top:119px;width:1px;height:92px;background:#c4e8e8;"></div>
<div style="position:absolute;left:287px;top:210px;width:724px;height:1px;background:#809a9a;"></div>
<div style="position:absolute;left:293px;top:184px;font-size:14px;font-weight:bold;color:#000;line-height:17px;white-space:pre;transform:scaleX(0.93);transform-origin:0 0;">Line</div>
<div style="position:absolute;left:330px;top:184px;font-size:14px;font-weight:bold;color:#000;line-height:17px;white-space:pre;transform:scaleX(0.93);transform-origin:0 0;">v</div>
<div style="position:absolute;left:346px;top:184px;font-size:14px;font-weight:normal;color:#000;line-height:17px;white-space:pre;transform:scaleX(0.93);transform-origin:0 0;">Folder</div>
<div style="position:absolute;left:445px;top:184px;font-size:14px;font-weight:normal;color:#000;line-height:17px;white-space:pre;transform:scaleX(0.93);transform-origin:0 0;">Name</div>
<div style="position:absolute;left:521px;top:184px;font-size:14px;font-weight:normal;color:#000;line-height:17px;white-space:pre;transform:scaleX(0.93);transform-origin:0 0;">Description</div>
<div style="position:absolute;left:716px;top:120px;font-size:14px;font-weight:normal;color:#000;line-height:17px;white-space:pre;transform:scaleX(0.93);transform-origin:0 0;">Begin:</div>
<div style="position:absolute;left:716px;top:136px;font-size:14px;font-weight:normal;color:#000;line-height:17px;white-space:pre;transform:scaleX(0.93);transform-origin:0 0;">End:</div>
<div style="position:absolute;left:716px;top:152px;font-size:14px;font-weight:normal;color:#000;line-height:17px;white-space:pre;transform:scaleX(0.93);transform-origin:0 0;">Index:</div>
<div style="position:absolute;left:755px;top:152px;font-size:14px;font-weight:normal;color:#000;line-height:17px;white-space:pre;transform:scaleX(0.93);transform-origin:0 0;">date</div>
<div style="position:absolute;left:716px;top:168px;font-size:14px;font-weight:normal;color:#000;line-height:17px;white-space:pre;transform:scaleX(0.93);transform-origin:0 0;">Type:</div>
<div style="position:absolute;left:756px;top:168px;font-size:14px;font-weight:normal;color:#000;line-height:17px;white-space:pre;transform:scaleX(0.93);transform-origin:0 0;">amount</div>
<div style="position:absolute;left:716px;top:184px;font-size:14px;font-weight:normal;color:#000;line-height:17px;white-space:pre;transform:scaleX(0.93);transform-origin:0 0;">Tag:</div>
<div style="position:absolute;left:757px;top:184px;font-size:14px;font-weight:normal;color:#000;line-height:17px;white-space:pre;transform:scaleX(0.93);transform-origin:0 0;">financial</div>
<div style="position:absolute;left:820px;top:168px;font-size:14px;font-weight:normal;color:#000;line-height:17px;white-space:pre;transform:scaleX(0.93);transform-origin:0 0;">Normal</div>
<div style="position:absolute;left:820px;top:184px;font-size:14px;font-weight:normal;color:#000;line-height:17px;white-space:pre;transform:scaleX(0.93);transform-origin:0 0;">Balance</div>
<div style="position:absolute;left:883px;top:184px;font-size:14px;font-weight:normal;color:#000;line-height:17px;white-space:pre;transform:scaleX(0.93);transform-origin:0 0;">Normal Rep</div>
<div style="position:absolute;left:967px;top:184px;font-size:14px;font-weight:normal;color:#000;line-height:17px;white-space:pre;transform:scaleX(0.93);transform-origin:0 0;">Active</div>
<div style="position:absolute;left:288px;top:211px;width:53px;height:20px;background:#c4e0e0;border-top:1px solid #8a9a9a;border-left:1px solid #8a9a9a;border-bottom:1px solid #fff;border-right:1px solid #fff;"></div>
<div style="position:absolute;left:288px;top:231px;width:53px;height:20px;background:#e0ffff;border-top:1px solid #8a9a9a;border-left:1px solid #8a9a9a;border-bottom:1px solid #f0ffff;border-right:1px solid #fff;"></div>
<div style="position:absolute;left:341px;top:211px;width:99px;height:20px;background:#c4e0e0;border-top:1px solid #8a9a9a;border-left:1px solid #8a9a9a;border-bottom:1px solid #fff;border-right:1px solid #fff;"></div>
<div style="position:absolute;left:341px;top:231px;width:99px;height:20px;background:#e0ffff;border-top:1px solid #8a9a9a;border-left:1px solid #8a9a9a;border-bottom:1px solid #f0ffff;border-right:1px solid #fff;"></div>
<div style="position:absolute;left:440px;top:211px;width:76px;height:20px;background:#c4e0e0;border-top:1px solid #8a9a9a;border-left:1px solid #8a9a9a;border-bottom:1px solid #fff;border-right:1px solid #fff;"></div>
<div style="position:absolute;left:440px;top:231px;width:76px;height:20px;background:#e0ffff;border-top:1px solid #8a9a9a;border-left:1px solid #8a9a9a;border-bottom:1px solid #f0ffff;border-right:1px solid #fff;"></div>
<div style="position:absolute;left:516px;top:211px;width:195px;height:20px;background:#ffffe0;border-top:1px solid #8a9a9a;border-left:1px solid #8a9a9a;border-bottom:1px solid #fff;border-right:1px solid #fff;"></div>
<div style="position:absolute;left:516px;top:231px;width:195px;height:20px;background:#e0ffff;border-top:1px solid #8a9a9a;border-left:1px solid #8a9a9a;border-bottom:1px solid #f0ffff;border-right:1px solid #fff;"></div>
<div style="position:absolute;left:711px;top:211px;width:104px;height:20px;background:#c4e0e0;border-top:1px solid #8a9a9a;border-left:1px solid #8a9a9a;border-bottom:1px solid #fff;border-right:1px solid #fff;"></div>
<div style="position:absolute;left:711px;top:231px;width:104px;height:20px;background:#e0ffff;border-top:1px solid #8a9a9a;border-left:1px solid #8a9a9a;border-bottom:1px solid #f0ffff;border-right:1px solid #fff;"></div>
<div style="position:absolute;left:815px;top:211px;width:63px;height:20px;background:#c4e0e0;border-top:1px solid #8a9a9a;border-left:1px solid #8a9a9a;border-bottom:1px solid #fff;border-right:1px solid #fff;"></div>
<div style="position:absolute;left:815px;top:231px;width:63px;height:20px;background:#e0ffff;border-top:1px solid #8a9a9a;border-left:1px solid #8a9a9a;border-bottom:1px solid #f0ffff;border-right:1px solid #fff;"></div>
<div style="position:absolute;left:878px;top:211px;width:84px;height:20px;background:#c4e0e0;border-top:1px solid #8a9a9a;border-left:1px solid #8a9a9a;border-bottom:1px solid #fff;border-right:1px solid #fff;"></div>
<div style="position:absolute;left:878px;top:231px;width:84px;height:20px;background:#e0ffff;border-top:1px solid #8a9a9a;border-left:1px solid #8a9a9a;border-bottom:1px solid #f0ffff;border-right:1px solid #fff;"></div>
<div style="position:absolute;left:962px;top:211px;width:49px;height:20px;background:#c4e0e0;border-top:1px solid #8a9a9a;border-left:1px solid #8a9a9a;border-bottom:1px solid #fff;border-right:1px solid #fff;"></div>
<div style="position:absolute;left:962px;top:231px;width:49px;height:20px;background:#e0ffff;border-top:1px solid #8a9a9a;border-left:1px solid #8a9a9a;border-bottom:1px solid #f0ffff;border-right:1px solid #fff;"></div>
<div style="position:absolute;left:289px;top:213px;font-size:14px;font-weight:normal;color:#000;line-height:17px;white-space:pre;transform:scaleX(0.93);transform-origin:0 0;">1</div>
<div style="position:absolute;left:342px;top:213px;font-size:14px;font-weight:normal;color:#000;line-height:17px;white-space:pre;transform:scaleX(0.93);transform-origin:0 0;">/AR/CURRENT</div>
<div style="position:absolute;left:441px;top:213px;font-size:14px;font-weight:normal;color:#000;line-height:17px;white-space:pre;transform:scaleX(0.93);transform-origin:0 0;">101-SMITH</div>
<div style="position:absolute;left:517px;top:213px;font-size:14px;font-weight:normal;color:#000;line-height:17px;white-space:pre;transform:scaleX(0.93);transform-origin:0 0;">Smith, James</div>
<div style="position:absolute;right:215px;top:213px;font-size:14px;font-weight:normal;line-height:17px;white-space:pre;transform:scaleX(0.93);transform-origin:100% 0;">0.00</div>
<div style="position:absolute;left:816px;top:213px;font-size:14px;font-weight:normal;color:#000;line-height:17px;white-space:pre;transform:scaleX(0.93);transform-origin:0 0;">debit</div>
<div style="position:absolute;left:879px;top:213px;font-size:14px;font-weight:normal;color:#000;line-height:17px;white-space:pre;transform:scaleX(0.93);transform-origin:0 0;">perpetual</div>
<div style="position:absolute;left:963px;top:213px;font-size:14px;font-weight:normal;color:#000;line-height:17px;white-space:pre;transform:scaleX(0.93);transform-origin:0 0;">active</div>
<div style="position:absolute;left:289px;top:233px;font-size:14px;font-weight:bold;color:#000;line-height:17px;white-space:pre;transform:scaleX(0.93);transform-origin:0 0;">2</div>
<div style="position:absolute;left:342px;top:233px;font-size:14px;font-weight:bold;color:#000;line-height:17px;white-space:pre;transform:scaleX(0.93);transform-origin:0 0;">/AR</div>
<div style="position:absolute;left:441px;top:233px;font-size:14px;font-weight:bold;color:#000;line-height:17px;white-space:pre;transform:scaleX(0.93);transform-origin:0 0;">CURRENT</div>
<div style="position:absolute;left:517px;top:233px;font-size:14px;font-weight:bold;color:#000;line-height:17px;white-space:pre;transform:scaleX(0.93);transform-origin:0 0;">Current Members / Tenants</div>
<div style="position:absolute;right:215px;top:233px;font-size:14px;font-weight:bold;line-height:17px;white-space:pre;transform:scaleX(0.93);transform-origin:100% 0;">0.00</div>
<div style="position:absolute;left:816px;top:233px;font-size:14px;font-weight:bold;color:#000;line-height:17px;white-space:pre;transform:scaleX(0.93);transform-origin:0 0;">debit</div>
<div style="position:absolute;left:879px;top:233px;font-size:14px;font-weight:bold;color:#000;line-height:17px;white-space:pre;transform:scaleX(0.93);transform-origin:0 0;">perpetual</div>
<div style="position:absolute;left:963px;top:233px;font-size:14px;font-weight:bold;color:#000;line-height:17px;white-space:pre;transform:scaleX(0.93);transform-origin:0 0;">active</div>
<div style="position:absolute;left:287px;top:251px;width:724px;height:19px;background:#ececec;"></div>
<svg style="position:absolute;left:292px;top:255px" width="8" height="10" viewBox="0 0 8 10"><path d="M6 1 L1.5 5 L6 9 Z" fill="#404040"/></svg>
<div style="position:absolute;left:306px;top:252px;width:446px;height:16px;background:linear-gradient(#f4f4f4,#e8e8e8 45%,#d8d8d8 50%,#cccccc);border:1px solid #959595;border-radius:2px;"></div>
<svg style="position:absolute;left:525px;top:256px" width="8" height="8" viewBox="0 0 8 8"><path d="M1.5 1 v6 M3.5 1 v6 M5.5 1 v6" stroke="#404040" stroke-width="0.9"/></svg>
<svg style="position:absolute;left:999px;top:255px" width="8" height="10" viewBox="0 0 8 10"><path d="M2 1 L6.5 5 L2 9 Z" fill="#404040"/></svg>
<div style="position:absolute;left:287px;top:271px;width:724px;height:16px;background:#000080;"></div>
<div style="position:absolute;left:288px;top:272px;width:13px;height:14px;background:#f0f0f0;"></div>
<svg style="position:absolute;left:289px;top:275px" width="11" height="9" viewBox="0 0 11 9"><path d="M1 1.5 L10 1.5 L5.5 7 Z" fill="#000"/></svg>
<div style="position:absolute;left:303px;top:272px;font-size:11px;font-weight:bold;color:#fff;line-height:14px;white-space:pre;">/ACCOUNT/AR/CURRENT/101-SMITH - Address</div>
<div style="position:absolute;left:997px;top:272px;width:14px;height:14px;background:#f0f0f0;"></div>
<svg style="position:absolute;left:998px;top:273px" width="12" height="12" viewBox="0 0 12 12"><path d="M1.5 1.5 L10.5 10.5 M10.5 1.5 L1.5 10.5" stroke="#000" stroke-width="1.6"/></svg>
<div style="position:absolute;left:287px;top:287px;width:724px;height:19px;background:#dcdcdc;"></div>
<div style="position:absolute;left:287px;top:305px;width:271px;height:1px;background:#000;"></div>
<div style="position:absolute;left:287px;top:287px;width:68px;height:18px;background:#dcdcdc;border-top:1px solid #fff;border-left:1px solid #fff;border-right:1px solid #000;"></div>
<div style="position:absolute;left:304px;top:289px;font-size:11px;font-weight:normal;color:#000;line-height:14px;white-space:pre;">Ledger</div>
<div style="position:absolute;left:355px;top:287px;width:67px;height:18px;background:#dcdcdc;border-top:1px solid #fff;border-left:1px solid #fff;border-right:1px solid #000;"></div>
<div style="position:absolute;left:371px;top:289px;font-size:11px;font-weight:normal;color:#000;line-height:14px;white-space:pre;">History</div>
<div style="position:absolute;left:422px;top:287px;width:75px;height:18px;background:#eee8d0;border-top:1px solid #fff;border-left:1px solid #fff;border-right:1px solid #000;"></div>
<div style="position:absolute;left:438px;top:289px;font-size:11px;font-weight:normal;color:#000;line-height:14px;white-space:pre;">Address</div>
<div style="position:absolute;left:497px;top:287px;width:61px;height:18px;background:#dcdcdc;border-top:1px solid #fff;border-left:1px solid #fff;border-right:1px solid #000;"></div>
<div style="position:absolute;left:513px;top:289px;font-size:11px;font-weight:normal;color:#000;line-height:14px;white-space:pre;">Notes</div>
<div style="position:absolute;left:287px;top:306px;width:706px;height:401px;background:#eee8d0;"></div>
<div style="position:absolute;left:287px;top:306px;width:59px;height:20px;border-top:1px solid #fff;border-right:1px solid #807868;"></div>
<div style="position:absolute;left:346px;top:306px;width:212px;height:20px;border-top:1px solid #fff;border-right:1px solid #807868;border-left:1px solid #fff;"></div>
<div style="position:absolute;left:558px;top:306px;width:352px;height:20px;border-top:1px solid #fff;border-right:1px solid #807868;border-left:1px solid #fff;"></div>
<div style="position:absolute;left:292px;top:307px;font-size:14px;font-weight:normal;color:#000;line-height:17px;white-space:pre;transform:scaleX(0.93);transform-origin:0 0;">Line</div>
<div style="position:absolute;left:350px;top:307px;font-size:14px;font-weight:normal;color:#000;line-height:17px;white-space:pre;transform:scaleX(0.93);transform-origin:0 0;">Data</div>
<div style="position:absolute;left:563px;top:307px;font-size:14px;font-weight:normal;color:#000;line-height:17px;white-space:pre;transform:scaleX(0.93);transform-origin:0 0;">Value</div>
<div style="position:absolute;left:287px;top:326px;width:59px;height:20px;background:#eee8d0;border-top:1px solid #8a8270;border-left:1px solid #8a8270;border-bottom:1px solid #fff;border-right:1px solid #fff;"></div>
<div style="position:absolute;left:346px;top:326px;width:212px;height:20px;background:#eee8d0;border-top:1px solid #8a8270;border-left:1px solid #8a8270;border-bottom:1px solid #fff;border-right:1px solid #fff;"></div>
<div style="position:absolute;left:558px;top:326px;width:352px;height:20px;background:#eee8d0;border-top:1px solid #8a8270;border-left:1px solid #8a8270;border-bottom:1px solid #fff;border-right:1px solid #fff;"></div>
<div style="position:absolute;left:289px;top:328px;font-size:14px;font-weight:normal;color:#000;line-height:17px;white-space:pre;transform:scaleX(0.93);transform-origin:0 0;">7</div>
<div style="position:absolute;left:347px;top:328px;font-size:14px;font-weight:normal;color:#000;line-height:17px;white-space:pre;transform:scaleX(0.93);transform-origin:0 0;">Street</div>
<div style="position:absolute;left:559px;top:328px;font-size:14px;font-weight:normal;color:#000;line-height:17px;white-space:pre;transform:scaleX(0.93);transform-origin:0 0;">73 Industrial Parkway</div>
<div style="position:absolute;left:287px;top:346px;width:59px;height:20px;background:#eee8d0;border-top:1px solid #8a8270;border-left:1px solid #8a8270;border-bottom:1px solid #fff;border-right:1px solid #fff;"></div>
<div style="position:absolute;left:346px;top:346px;width:212px;height:20px;background:#eee8d0;border-top:1px solid #8a8270;border-left:1px solid #8a8270;border-bottom:1px solid #fff;border-right:1px solid #fff;"></div>
<div style="position:absolute;left:558px;top:346px;width:352px;height:20px;background:#eee8d0;border-top:1px solid #8a8270;border-left:1px solid #8a8270;border-bottom:1px solid #fff;border-right:1px solid #fff;"></div>
<div style="position:absolute;left:289px;top:348px;font-size:14px;font-weight:normal;color:#000;line-height:17px;white-space:pre;transform:scaleX(0.93);transform-origin:0 0;">8</div>
<div style="position:absolute;left:347px;top:348px;font-size:14px;font-weight:normal;color:#000;line-height:17px;white-space:pre;transform:scaleX(0.93);transform-origin:0 0;">Street2</div>
<div style="position:absolute;left:559px;top:348px;font-size:14px;font-weight:normal;color:#000;line-height:17px;white-space:pre;transform:scaleX(0.93);transform-origin:0 0;">Unit 101</div>
<div style="position:absolute;left:287px;top:366px;width:59px;height:20px;background:#eee8d0;border-top:1px solid #8a8270;border-left:1px solid #8a8270;border-bottom:1px solid #fff;border-right:1px solid #fff;"></div>
<div style="position:absolute;left:346px;top:366px;width:212px;height:20px;background:#eee8d0;border-top:1px solid #8a8270;border-left:1px solid #8a8270;border-bottom:1px solid #fff;border-right:1px solid #fff;"></div>
<div style="position:absolute;left:558px;top:366px;width:352px;height:20px;background:#eee8d0;border-top:1px solid #8a8270;border-left:1px solid #8a8270;border-bottom:1px solid #fff;border-right:1px solid #fff;"></div>
<div style="position:absolute;left:289px;top:368px;font-size:14px;font-weight:normal;color:#000;line-height:17px;white-space:pre;transform:scaleX(0.93);transform-origin:0 0;">9</div>
<div style="position:absolute;left:347px;top:368px;font-size:14px;font-weight:normal;color:#000;line-height:17px;white-space:pre;transform:scaleX(0.93);transform-origin:0 0;">City</div>
<div style="position:absolute;left:559px;top:368px;font-size:14px;font-weight:normal;color:#000;line-height:17px;white-space:pre;transform:scaleX(0.93);transform-origin:0 0;">Aurora</div>
<div style="position:absolute;left:287px;top:386px;width:59px;height:20px;background:#eee8d0;border-top:1px solid #8a8270;border-left:1px solid #8a8270;border-bottom:1px solid #fff;border-right:1px solid #fff;"></div>
<div style="position:absolute;left:346px;top:386px;width:212px;height:20px;background:#eee8d0;border-top:1px solid #8a8270;border-left:1px solid #8a8270;border-bottom:1px solid #fff;border-right:1px solid #fff;"></div>
<div style="position:absolute;left:558px;top:386px;width:352px;height:20px;background:#eee8d0;border-top:1px solid #8a8270;border-left:1px solid #8a8270;border-bottom:1px solid #fff;border-right:1px solid #fff;"></div>
<div style="position:absolute;left:289px;top:388px;font-size:14px;font-weight:normal;color:#000;line-height:17px;white-space:pre;transform:scaleX(0.93);transform-origin:0 0;">10</div>
<div style="position:absolute;left:347px;top:388px;font-size:14px;font-weight:normal;color:#000;line-height:17px;white-space:pre;transform:scaleX(0.93);transform-origin:0 0;">State/Province</div>
<div style="position:absolute;left:559px;top:388px;font-size:14px;font-weight:normal;color:#000;line-height:17px;white-space:pre;transform:scaleX(0.93);transform-origin:0 0;">ON</div>
<div style="position:absolute;left:287px;top:406px;width:59px;height:20px;background:#eee8d0;border-top:1px solid #8a8270;border-left:1px solid #8a8270;border-bottom:1px solid #fff;border-right:1px solid #fff;"></div>
<div style="position:absolute;left:346px;top:406px;width:212px;height:20px;background:#eee8d0;border-top:1px solid #8a8270;border-left:1px solid #8a8270;border-bottom:1px solid #fff;border-right:1px solid #fff;"></div>
<div style="position:absolute;left:558px;top:406px;width:352px;height:20px;background:#eee8d0;border-top:1px solid #8a8270;border-left:1px solid #8a8270;border-bottom:1px solid #fff;border-right:1px solid #fff;"></div>
<div style="position:absolute;left:289px;top:408px;font-size:14px;font-weight:normal;color:#000;line-height:17px;white-space:pre;transform:scaleX(0.93);transform-origin:0 0;">11</div>
<div style="position:absolute;left:347px;top:408px;font-size:14px;font-weight:normal;color:#000;line-height:17px;white-space:pre;transform:scaleX(0.93);transform-origin:0 0;">Country</div>
<div style="position:absolute;left:559px;top:408px;font-size:14px;font-weight:normal;color:#000;line-height:17px;white-space:pre;transform:scaleX(0.93);transform-origin:0 0;">Canada</div>
<div style="position:absolute;left:287px;top:426px;width:59px;height:20px;background:#eee8d0;border-top:1px solid #8a8270;border-left:1px solid #8a8270;border-bottom:1px solid #fff;border-right:1px solid #fff;"></div>
<div style="position:absolute;left:346px;top:426px;width:212px;height:20px;background:#eee8d0;border-top:1px solid #8a8270;border-left:1px solid #8a8270;border-bottom:1px solid #fff;border-right:1px solid #fff;"></div>
<div style="position:absolute;left:558px;top:426px;width:352px;height:20px;background:#eee8d0;border-top:1px solid #8a8270;border-left:1px solid #8a8270;border-bottom:1px solid #fff;border-right:1px solid #fff;"></div>
<div style="position:absolute;left:289px;top:428px;font-size:14px;font-weight:normal;color:#000;line-height:17px;white-space:pre;transform:scaleX(0.93);transform-origin:0 0;">12</div>
<div style="position:absolute;left:347px;top:428px;font-size:14px;font-weight:normal;color:#000;line-height:17px;white-space:pre;transform:scaleX(0.93);transform-origin:0 0;">Zip/Postal Code</div>
<div style="position:absolute;left:559px;top:428px;font-size:14px;font-weight:normal;color:#000;line-height:17px;white-space:pre;transform:scaleX(0.93);transform-origin:0 0;">L4G 4C4</div>
<div style="position:absolute;left:287px;top:446px;width:59px;height:20px;background:#eee8d0;border-top:1px solid #8a8270;border-left:1px solid #8a8270;border-bottom:1px solid #fff;border-right:1px solid #fff;"></div>
<div style="position:absolute;left:346px;top:446px;width:212px;height:20px;background:#eee8d0;border-top:1px solid #8a8270;border-left:1px solid #8a8270;border-bottom:1px solid #fff;border-right:1px solid #fff;"></div>
<div style="position:absolute;left:558px;top:446px;width:352px;height:20px;background:#eee8d0;border-top:1px solid #8a8270;border-left:1px solid #8a8270;border-bottom:1px solid #fff;border-right:1px solid #fff;"></div>
<div style="position:absolute;left:289px;top:448px;font-size:14px;font-weight:normal;color:#000;line-height:17px;white-space:pre;transform:scaleX(0.93);transform-origin:0 0;">13</div>
<div style="position:absolute;left:347px;top:448px;font-size:14px;font-weight:normal;color:#000;line-height:17px;white-space:pre;transform:scaleX(0.93);transform-origin:0 0;">Phone Freeform</div>
<div style="position:absolute;left:559px;top:448px;font-size:14px;font-weight:normal;color:#000;line-height:17px;white-space:pre;transform:scaleX(0.93);transform-origin:0 0;">416-932-7743</div>
<div style="position:absolute;left:287px;top:466px;width:59px;height:20px;background:#eee8d0;border-top:1px solid #8a8270;border-left:1px solid #8a8270;border-bottom:1px solid #fff;border-right:1px solid #fff;"></div>
<div style="position:absolute;left:346px;top:466px;width:212px;height:20px;background:#eee8d0;border-top:1px solid #8a8270;border-left:1px solid #8a8270;border-bottom:1px solid #fff;border-right:1px solid #fff;"></div>
<div style="position:absolute;left:558px;top:466px;width:352px;height:20px;background:#eee8d0;border-top:1px solid #8a8270;border-left:1px solid #8a8270;border-bottom:1px solid #fff;border-right:1px solid #fff;"></div>
<div style="position:absolute;left:289px;top:468px;font-size:14px;font-weight:normal;color:#000;line-height:17px;white-space:pre;transform:scaleX(0.93);transform-origin:0 0;">14</div>
<div style="position:absolute;left:347px;top:468px;font-size:14px;font-weight:normal;color:#000;line-height:17px;white-space:pre;transform:scaleX(0.93);transform-origin:0 0;">Country Code</div>
<div style="position:absolute;left:287px;top:486px;width:59px;height:20px;background:#eee8d0;border-top:1px solid #8a8270;border-left:1px solid #8a8270;border-bottom:1px solid #fff;border-right:1px solid #fff;"></div>
<div style="position:absolute;left:346px;top:486px;width:212px;height:20px;background:#eee8d0;border-top:1px solid #8a8270;border-left:1px solid #8a8270;border-bottom:1px solid #fff;border-right:1px solid #fff;"></div>
<div style="position:absolute;left:558px;top:486px;width:352px;height:20px;background:#eee8d0;border-top:1px solid #8a8270;border-left:1px solid #8a8270;border-bottom:1px solid #fff;border-right:1px solid #fff;"></div>
<div style="position:absolute;left:289px;top:488px;font-size:14px;font-weight:normal;color:#000;line-height:17px;white-space:pre;transform:scaleX(0.93);transform-origin:0 0;">15</div>
<div style="position:absolute;left:347px;top:488px;font-size:14px;font-weight:normal;color:#000;line-height:17px;white-space:pre;transform:scaleX(0.93);transform-origin:0 0;">Area Code</div>
<div style="position:absolute;left:287px;top:506px;width:59px;height:20px;background:#eee8d0;border-top:1px solid #8a8270;border-left:1px solid #8a8270;border-bottom:1px solid #fff;border-right:1px solid #fff;"></div>
<div style="position:absolute;left:346px;top:506px;width:212px;height:20px;background:#eee8d0;border-top:1px solid #8a8270;border-left:1px solid #8a8270;border-bottom:1px solid #fff;border-right:1px solid #fff;"></div>
<div style="position:absolute;left:558px;top:506px;width:352px;height:20px;background:#eee8d0;border-top:1px solid #8a8270;border-left:1px solid #8a8270;border-bottom:1px solid #fff;border-right:1px solid #fff;"></div>
<div style="position:absolute;left:289px;top:508px;font-size:14px;font-weight:normal;color:#000;line-height:17px;white-space:pre;transform:scaleX(0.93);transform-origin:0 0;">16</div>
<div style="position:absolute;left:347px;top:508px;font-size:14px;font-weight:normal;color:#000;line-height:17px;white-space:pre;transform:scaleX(0.93);transform-origin:0 0;">Prefix</div>
<div style="position:absolute;left:287px;top:526px;width:59px;height:20px;background:#eee8d0;border-top:1px solid #8a8270;border-left:1px solid #8a8270;border-bottom:1px solid #fff;border-right:1px solid #fff;"></div>
<div style="position:absolute;left:346px;top:526px;width:212px;height:20px;background:#eee8d0;border-top:1px solid #8a8270;border-left:1px solid #8a8270;border-bottom:1px solid #fff;border-right:1px solid #fff;"></div>
<div style="position:absolute;left:558px;top:526px;width:352px;height:20px;background:#eee8d0;border-top:1px solid #8a8270;border-left:1px solid #8a8270;border-bottom:1px solid #fff;border-right:1px solid #fff;"></div>
<div style="position:absolute;left:289px;top:528px;font-size:14px;font-weight:normal;color:#000;line-height:17px;white-space:pre;transform:scaleX(0.93);transform-origin:0 0;">17</div>
<div style="position:absolute;left:347px;top:528px;font-size:14px;font-weight:normal;color:#000;line-height:17px;white-space:pre;transform:scaleX(0.93);transform-origin:0 0;">Suffix</div>
<div style="position:absolute;left:287px;top:546px;width:59px;height:20px;background:#eee8d0;border-top:1px solid #8a8270;border-left:1px solid #8a8270;border-bottom:1px solid #fff;border-right:1px solid #fff;"></div>
<div style="position:absolute;left:346px;top:546px;width:212px;height:20px;background:#eee8d0;border-top:1px solid #8a8270;border-left:1px solid #8a8270;border-bottom:1px solid #fff;border-right:1px solid #fff;"></div>
<div style="position:absolute;left:558px;top:546px;width:352px;height:20px;background:#eee8d0;border-top:1px solid #8a8270;border-left:1px solid #8a8270;border-bottom:1px solid #fff;border-right:1px solid #fff;"></div>
<div style="position:absolute;left:289px;top:548px;font-size:14px;font-weight:normal;color:#000;line-height:17px;white-space:pre;transform:scaleX(0.93);transform-origin:0 0;">18</div>
<div style="position:absolute;left:347px;top:548px;font-size:14px;font-weight:normal;color:#000;line-height:17px;white-space:pre;transform:scaleX(0.93);transform-origin:0 0;">Extension</div>
<div style="position:absolute;left:287px;top:566px;width:59px;height:20px;background:#eee8d0;border-top:1px solid #8a8270;border-left:1px solid #8a8270;border-bottom:1px solid #fff;border-right:1px solid #fff;"></div>
<div style="position:absolute;left:346px;top:566px;width:212px;height:20px;background:#eee8d0;border-top:1px solid #8a8270;border-left:1px solid #8a8270;border-bottom:1px solid #fff;border-right:1px solid #fff;"></div>
<div style="position:absolute;left:558px;top:566px;width:352px;height:20px;background:#eee8d0;border-top:1px solid #8a8270;border-left:1px solid #8a8270;border-bottom:1px solid #fff;border-right:1px solid #fff;"></div>
<div style="position:absolute;left:289px;top:568px;font-size:14px;font-weight:normal;color:#000;line-height:17px;white-space:pre;transform:scaleX(0.93);transform-origin:0 0;">19</div>
<div style="position:absolute;left:347px;top:568px;font-size:14px;font-weight:normal;color:#000;line-height:17px;white-space:pre;transform:scaleX(0.93);transform-origin:0 0;">Fax Freeform</div>
<div style="position:absolute;left:287px;top:586px;width:59px;height:20px;background:#eee8d0;border-top:1px solid #8a8270;border-left:1px solid #8a8270;border-bottom:1px solid #fff;border-right:1px solid #fff;"></div>
<div style="position:absolute;left:346px;top:586px;width:212px;height:20px;background:#eee8d0;border-top:1px solid #8a8270;border-left:1px solid #8a8270;border-bottom:1px solid #fff;border-right:1px solid #fff;"></div>
<div style="position:absolute;left:558px;top:586px;width:352px;height:20px;background:#eee8d0;border-top:1px solid #8a8270;border-left:1px solid #8a8270;border-bottom:1px solid #fff;border-right:1px solid #fff;"></div>
<div style="position:absolute;left:289px;top:588px;font-size:14px;font-weight:normal;color:#000;line-height:17px;white-space:pre;transform:scaleX(0.93);transform-origin:0 0;">20</div>
<div style="position:absolute;left:347px;top:588px;font-size:14px;font-weight:normal;color:#000;line-height:17px;white-space:pre;transform:scaleX(0.93);transform-origin:0 0;">Country Code</div>
<div style="position:absolute;left:287px;top:606px;width:59px;height:20px;background:#eee8d0;border-top:1px solid #8a8270;border-left:1px solid #8a8270;border-bottom:1px solid #fff;border-right:1px solid #fff;"></div>
<div style="position:absolute;left:346px;top:606px;width:212px;height:20px;background:#eee8d0;border-top:1px solid #8a8270;border-left:1px solid #8a8270;border-bottom:1px solid #fff;border-right:1px solid #fff;"></div>
<div style="position:absolute;left:558px;top:606px;width:352px;height:20px;background:#eee8d0;border-top:1px solid #8a8270;border-left:1px solid #8a8270;border-bottom:1px solid #fff;border-right:1px solid #fff;"></div>
<div style="position:absolute;left:289px;top:608px;font-size:14px;font-weight:normal;color:#000;line-height:17px;white-space:pre;transform:scaleX(0.93);transform-origin:0 0;">21</div>
<div style="position:absolute;left:347px;top:608px;font-size:14px;font-weight:normal;color:#000;line-height:17px;white-space:pre;transform:scaleX(0.93);transform-origin:0 0;">Area Code</div>
<div style="position:absolute;left:287px;top:626px;width:59px;height:20px;background:#eee8d0;border-top:1px solid #8a8270;border-left:1px solid #8a8270;border-bottom:1px solid #fff;border-right:1px solid #fff;"></div>
<div style="position:absolute;left:346px;top:626px;width:212px;height:20px;background:#eee8d0;border-top:1px solid #8a8270;border-left:1px solid #8a8270;border-bottom:1px solid #fff;border-right:1px solid #fff;"></div>
<div style="position:absolute;left:558px;top:626px;width:352px;height:20px;background:#eee8d0;border-top:1px solid #8a8270;border-left:1px solid #8a8270;border-bottom:1px solid #fff;border-right:1px solid #fff;"></div>
<div style="position:absolute;left:289px;top:628px;font-size:14px;font-weight:normal;color:#000;line-height:17px;white-space:pre;transform:scaleX(0.93);transform-origin:0 0;">22</div>
<div style="position:absolute;left:347px;top:628px;font-size:14px;font-weight:normal;color:#000;line-height:17px;white-space:pre;transform:scaleX(0.93);transform-origin:0 0;">Prefix</div>
<div style="position:absolute;left:287px;top:646px;width:59px;height:20px;background:#eee8d0;border-top:1px solid #8a8270;border-left:1px solid #8a8270;border-bottom:1px solid #fff;border-right:1px solid #fff;"></div>
<div style="position:absolute;left:346px;top:646px;width:212px;height:20px;background:#eee8d0;border-top:1px solid #8a8270;border-left:1px solid #8a8270;border-bottom:1px solid #fff;border-right:1px solid #fff;"></div>
<div style="position:absolute;left:558px;top:646px;width:352px;height:20px;background:#eee8d0;border-top:1px solid #8a8270;border-left:1px solid #8a8270;border-bottom:1px solid #fff;border-right:1px solid #fff;"></div>
<div style="position:absolute;left:289px;top:648px;font-size:14px;font-weight:normal;color:#000;line-height:17px;white-space:pre;transform:scaleX(0.93);transform-origin:0 0;">23</div>
<div style="position:absolute;left:347px;top:648px;font-size:14px;font-weight:normal;color:#000;line-height:17px;white-space:pre;transform:scaleX(0.93);transform-origin:0 0;">Suffix</div>
<div style="position:absolute;left:287px;top:666px;width:59px;height:20px;background:#d0c8b0;border-top:1px solid #8a8270;border-left:1px solid #8a8270;border-bottom:1px solid #fff;border-right:1px solid #fff;"></div>
<div style="position:absolute;left:346px;top:666px;width:212px;height:20px;background:#d0c8b0;border-top:1px solid #8a8270;border-left:1px solid #8a8270;border-bottom:1px solid #fff;border-right:1px solid #fff;"></div>
<div style="position:absolute;left:558px;top:666px;width:352px;height:20px;background:#ffff00;border-top:1px solid #8a8270;border-right:1px solid #fff;"></div>
<div style="position:absolute;left:289px;top:668px;font-size:14px;font-weight:normal;color:#000;line-height:17px;white-space:pre;transform:scaleX(0.93);transform-origin:0 0;">24</div>
<div style="position:absolute;left:347px;top:668px;font-size:14px;font-weight:normal;color:#000;line-height:17px;white-space:pre;transform:scaleX(0.93);transform-origin:0 0;">Extension</div>
<div style="position:absolute;left:287px;top:686px;width:59px;height:20px;background:#eee8d0;border-top:1px solid #8a8270;border-left:1px solid #8a8270;border-bottom:1px solid #fff;border-right:1px solid #fff;"></div>
<div style="position:absolute;left:346px;top:686px;width:212px;height:20px;background:#eee8d0;border-top:1px solid #8a8270;border-left:1px solid #8a8270;border-bottom:1px solid #fff;border-right:1px solid #fff;"></div>
<div style="position:absolute;left:558px;top:686px;width:352px;height:20px;background:#eee8d0;border-top:1px solid #8a8270;border-left:1px solid #8a8270;border-bottom:1px solid #fff;border-right:1px solid #fff;"></div>
<div style="position:absolute;left:289px;top:688px;font-size:14px;font-weight:normal;color:#000;line-height:17px;white-space:pre;transform:scaleX(0.93);transform-origin:0 0;">25</div>
<div style="position:absolute;left:347px;top:688px;font-size:14px;font-weight:normal;color:#000;line-height:17px;white-space:pre;transform:scaleX(0.93);transform-origin:0 0;">Email</div>
<div style="position:absolute;left:559px;top:688px;font-size:14px;font-weight:normal;color:#000;line-height:17px;white-space:pre;transform:scaleX(0.93);transform-origin:0 0;">b.smith@gmail.com</div>
<div style="position:absolute;left:559px;top:667px;width:3px;height:17px;background:#000;"></div>
<div style="position:absolute;left:284px;top:325px;width:625px;height:144px;border:2px solid #ff0000;"></div>
<div style="position:absolute;left:284px;top:685px;width:629px;height:23px;border:2px solid #ff0000;"></div>
<div style="position:absolute;left:993px;top:306px;width:18px;height:401px;background:linear-gradient(90deg,#e4e4e4,#f0f0f0 50%,#e8e8e8);"></div>
<div style="position:absolute;left:995px;top:307px;width:15px;height:16px;background:linear-gradient(90deg,#f8f8f8,#e8e8e8 50%,#d8d8d8);border:1px solid #a0a0a0;border-radius:2px;"></div>
<svg style="position:absolute;left:998px;top:311px" width="9" height="6" viewBox="0 0 9 6"><path d="M1 5 L4.5 1 L8 5 Z" fill="#404040"/></svg>
<div style="position:absolute;left:995px;top:409px;width:15px;height:267px;background:linear-gradient(90deg,#d8f0fc,#c0e4f8 50%,#a8d8f4);border:1px solid #3c7fb1;border-radius:2px;"></div>
<svg style="position:absolute;left:998px;top:537px" width="9" height="8" viewBox="0 0 9 8"><path d="M1 1.5 h7 M1 3.5 h7 M1 5.5 h7" stroke="#2a5a8a" stroke-width="0.9"/></svg>
<div style="position:absolute;left:995px;top:690px;width:15px;height:16px;background:linear-gradient(90deg,#f8f8f8,#e8e8e8 50%,#d8d8d8);border:1px solid #a0a0a0;border-radius:2px;"></div>
<svg style="position:absolute;left:998px;top:696px" width="9" height="6" viewBox="0 0 9 6"><path d="M1 1 L4.5 5 L8 1 Z" fill="#404040"/></svg>
</body></html>
